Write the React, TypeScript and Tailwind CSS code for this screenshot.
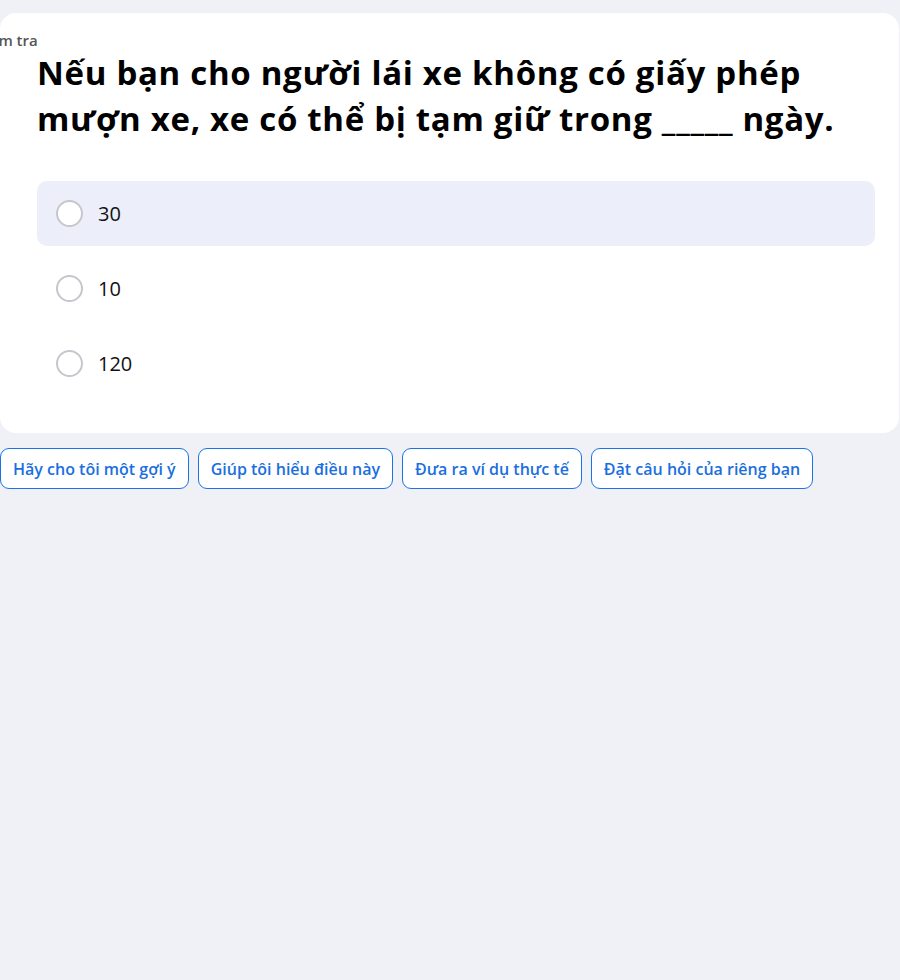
const options = ["30", "10", "120"];
const chips = [
  "Hãy cho tôi một gợi ý",
  "Giúp tôi hiểu điều này",
  "Đưa ra ví dụ thực tế",
  "Đặt câu hỏi của riêng bạn",
];

const App = () => {
  return (
    <div
      className="min-h-[980px] w-[900px] overflow-hidden bg-[#f0f1f6] pt-[13px]"
      style={{ fontFamily: '"Open Sans", "Noto Sans", sans-serif' }}
    >
      <div className="w-[899px] rounded-2xl bg-white pb-[37px] pl-[37px] pr-[20px] pt-[18px]">
        <div className="-ml-[61px] text-[15px] font-semibold leading-[18px] text-[#555]">Kiểm tra</div>
        <h1 className="mt-[1px] text-[33px] font-bold leading-[46px] tracking-[0.7px] text-black">
          Nếu bạn cho người lái xe không có giấy phép mượn xe, xe có thể bị tạm giữ trong _____ ngày.
        </h1>
        <div className="mt-[39px] mr-[4px] flex flex-col gap-[10px]">
          {options.map((o, i) => (
            <div
              key={o}
              className={`flex h-[65px] items-center gap-[15px] rounded-[10px] px-[19px] ${i === 0 ? "bg-[#eceef9]" : ""}`}
            >
              <span className="h-[27px] w-[27px] rounded-full border-2 border-[#c6c6ce] bg-white" />
              <span className="text-[20px] text-[#111]">{o}</span>
            </div>
          ))}
        </div>
      </div>
      <div className="mt-[15px] flex gap-[9px]">
        {chips.map((c) => (
          <button
            key={c}
            className="h-[41px] rounded-[9px] border border-[#1a73e8] bg-white px-[12px] text-[16px] font-semibold text-[#1a6fe0]"
          >
            {c}
          </button>
        ))}
      </div>
    </div>
  );
};

export default App;
